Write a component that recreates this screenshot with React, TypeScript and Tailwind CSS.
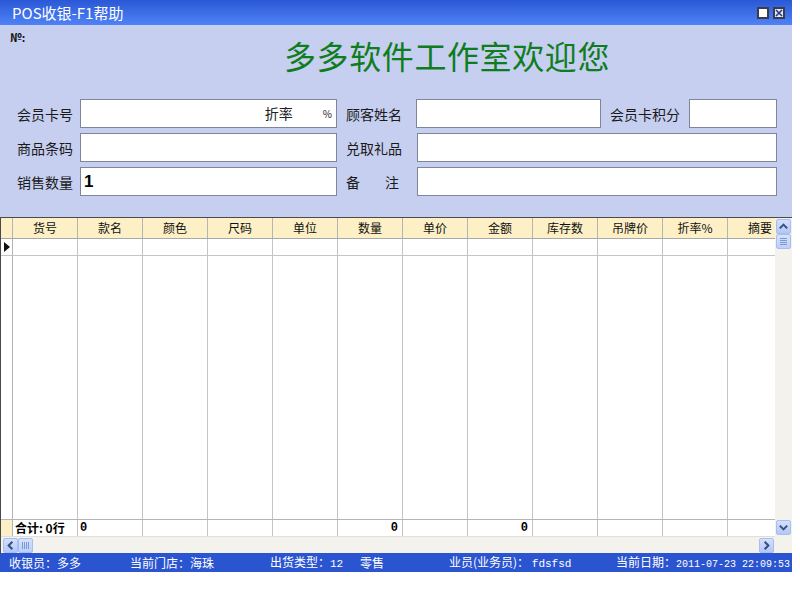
const cjk = { fontFamily: '"Noto Sans CJK SC", "Liberation Sans", sans-serif' }
const mono = { fontFamily: '"Liberation Mono", "Noto Sans CJK SC", monospace' }

const columns = ['货号', '款名', '颜色', '尺码', '单位', '数量', '单价', '金额', '库存数', '吊牌价', '折率%', '摘要']

const Chevron = ({ dir }: { dir: 'up' | 'down' | 'left' | 'right' }) => {
  const d = {
    up: 'M3 9 L7 5 L11 9',
    down: 'M3 5 L7 9 L11 5',
    left: 'M9 3 L5 7 L9 11',
    right: 'M5 3 L9 7 L5 11',
  }[dir]
  return (
    <svg width="13" height="13" viewBox="0 0 14 14">
      <path d={d} fill="none" stroke="#3a4f80" strokeWidth="2.2" />
    </svg>
  )
}

const ScrollBtn = ({ dir }: { dir: 'up' | 'down' | 'left' | 'right' }) => (
  <div className="w-[15px] h-[15px] shrink-0 flex items-center justify-center rounded-[2px] border border-[#a9bdee] bg-gradient-to-b from-[#d3e0fd] to-[#b2c8f6]">
    <Chevron dir={dir} />
  </div>
)

const Thumb = ({ vertical }: { vertical?: boolean }) => (
  <div className="w-[15px] h-[15px] shrink-0 flex items-center justify-center rounded-[2px] border border-[#a9bdee] bg-gradient-to-b from-[#d6e2fd] to-[#bcd0f8]">
    <div className={vertical ? 'flex flex-col gap-[1px]' : 'flex gap-[1px]'}>
      {[0, 1, 2, 3].map((i) => (
        <div key={i} className={vertical ? 'w-[7px] h-[1px] bg-[#7d98d0]' : 'w-[1px] h-[7px] bg-[#7d98d0]'} />
      ))}
    </div>
  </div>
)

const Field = ({ w, children }: { w: string; children?: React.ReactNode }) => (
  <div className={`${w} h-[29px] bg-white border border-[#7d8799] flex items-center`}>{children}</div>
)

const Label = ({ w, children }: { w: string; children: React.ReactNode }) => (
  <div className={`${w} text-[14px] text-[#1a1a1a] leading-none`}>{children}</div>
)

export default function App() {
  return (
    <div className="w-[792px] h-[572px] flex flex-col bg-[#c6cff0] select-none" style={cjk}>
      {/* title bar */}
      <div className="h-[25px] flex items-center justify-between bg-gradient-to-b from-[#2b58d6] to-[#4f82f6] pl-[12px] pr-[7px]">
        <span className="text-white text-[15px] leading-none">POS收银-F1帮助</span>
        <div className="flex gap-[4px]">
          <div className="w-[12px] h-[12px] border-2 border-[#3c3c48] bg-white" />
          <div className="w-[12px] h-[12px] border-2 border-[#3c3c48] bg-[#dfe8ff] flex items-center justify-center">
            <svg width="8" height="8" viewBox="0 0 8 8">
              <path d="M1 1 L7 7 M7 1 L1 7" stroke="#2a3a78" strokeWidth="1.6" />
            </svg>
          </div>
        </div>
      </div>

      {/* header */}
      <div className="h-[192px] flex flex-col">
        <div className="pl-[10px] pt-[7px] h-[15px] text-[11px] font-bold leading-none text-[#111]">№:</div>
        <div className="ml-[284px] mt-[-1px] text-[32px] leading-none text-[#0f7d1e] tracking-[0.6px]">多多软件工作室欢迎您</div>
        <div className="mt-[28px] pl-[17px] flex flex-col gap-[5px]">
          <div className="flex items-center">
            <Label w="w-[63px]">会员卡号</Label>
            <Field w="w-[257px]">
              <div className="flex-1 flex items-center justify-end pr-[4px] text-[14px] text-[#222]">
                <span>折率</span>
                <span className="ml-[30px] text-[10px]">%</span>
              </div>
            </Field>
            <div className="w-[9px]" />
            <Label w="w-[70px]">顾客姓名</Label>
            <Field w="w-[185px]" />
            <div className="w-[9px]" />
            <Label w="w-[79px]">会员卡积分</Label>
            <Field w="w-[88px]" />
          </div>
          <div className="flex items-center">
            <Label w="w-[63px]">商品条码</Label>
            <Field w="w-[257px]" />
            <div className="w-[9px]" />
            <Label w="w-[71px]">兑取礼品</Label>
            <Field w="w-[360px]" />
          </div>
          <div className="flex items-center">
            <Label w="w-[63px]">销售数量</Label>
            <Field w="w-[257px]">
              <span className="pl-[3px] text-[17px] font-bold leading-none text-black" style={{ fontFamily: '"Liberation Sans", sans-serif' }}>1</span>
            </Field>
            <div className="w-[9px]" />
            <Label w="w-[71px]">
              <span>备</span>
              <span className="ml-[25px]">注</span>
            </Label>
            <Field w="w-[360px]" />
          </div>
        </div>
      </div>

      {/* grid */}
      <div className="h-[336px] flex border-t border-l border-[#4a4a4a] bg-[#f3f2ec]">
        <div className="w-[774px] flex flex-col">
          <div className="flex-1 flex flex-col overflow-hidden bg-white">
            <div className="h-[21px] flex border-b border-[#a8a8a8] bg-[#fdf0c6] text-[12px] text-[#111]">
              <div className="w-[12px] shrink-0 border-r border-[#b4b4b4]" />
              {columns.map((c) => (
                <div key={c} className="w-[65px] shrink-0 border-r border-[#b4b4b4] flex items-center justify-center leading-none">
                  {c}
                </div>
              ))}
            </div>
            <div className="h-[17px] flex border-b border-[#c4c4c4]">
              <div className="w-[12px] shrink-0 border-r border-[#b4b4b4] flex items-center pl-[3px]">
                <svg width="6" height="10" viewBox="0 0 6 10">
                  <path d="M0 0 L6 5 L0 10 Z" fill="#111" />
                </svg>
              </div>
              {columns.map((c) => (
                <div key={c} className="w-[65px] shrink-0 border-r border-[#c4c4c4]" />
              ))}
            </div>
            <div className="flex-1 flex">
              <div className="w-[12px] shrink-0 border-r border-[#b4b4b4]" />
              {columns.map((c) => (
                <div key={c} className="w-[65px] shrink-0 border-r border-[#c4c4c4]" />
              ))}
            </div>
            <div className="h-[17px] flex border-t border-[#b4b4b4] text-[12px] font-bold text-black leading-none">
              <div className="w-[12px] shrink-0 border-r border-[#b4b4b4] bg-[#fdf0c6]" />
              {columns.map((c, i) => (
                <div
                  key={c}
                  className={`w-[65px] shrink-0 border-r border-[#c4c4c4] flex items-center ${i === 5 || i === 7 ? 'justify-end pr-[4px]' : 'pl-[2px]'}`}
                >
                  {i === 0 ? '合计: 0行' : i === 1 || i === 5 || i === 7 ? <span style={mono}>0</span> : ''}
                </div>
              ))}
            </div>
          </div>
          <div className="h-[17px] flex items-center justify-between pl-[2px] pr-[1px] bg-[#f3f2ec] border-t border-[#e2e0d6]">
            <div className="flex">
              <ScrollBtn dir="left" />
              <Thumb />
            </div>
            <ScrollBtn dir="right" />
          </div>
        </div>
        <div className="w-[17px] flex flex-col items-center pt-[1px] pb-[18px] bg-[#f3f2ec]">
          <ScrollBtn dir="up" />
          <Thumb vertical />
          <div className="flex-1" />
          <ScrollBtn dir="down" />
        </div>
      </div>

      {/* status bar */}
      <div className="h-[19px] flex items-center bg-[#2b55d0] text-white text-[12px] leading-none pl-[9px] whitespace-nowrap">
        <span className="w-[121px]">收银员：多多</span>
        <span className="w-[140px]">当前门店：海珠</span>
        <span className="w-[90px]">出货类型：<span style={mono} className="text-[11px]">12</span></span>
        <span className="w-[89px]">零售</span>
        <span className="w-[167px]">业员(业务员)： <span style={mono} className="text-[11px]">fdsfsd</span></span>
        <span>当前日期：<span style={mono} className="text-[10px]">2011-07-23 22:09:53</span></span>
      </div>
    </div>
  )
}
